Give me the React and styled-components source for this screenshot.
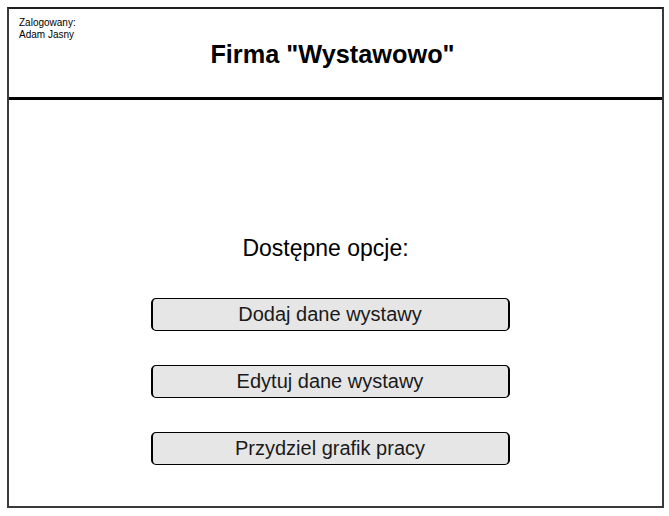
import React from "react";
import styled, { createGlobalStyle } from "styled-components";

const Global = createGlobalStyle`
  body {
    margin: 0;
    background: #ffffff;
    font-family: "Liberation Sans", Arial, sans-serif;
  }
`;

const options = ["Dodaj dane wystawy", "Edytuj dane wystawy", "Przydziel grafik pracy"];

const App = () => {
  return (
    <>
      <Global />
      <Frame>
        <Header>
          <User>
            Zalogowany:
            <br />
            Adam Jasny
          </User>
          <Title>Firma "Wystawowo"</Title>
        </Header>
        <Main>
          <Heading>Dostępne opcje:</Heading>
          <Options>
            {options.map((o) => (
              <OptionButton key={o}>{o}</OptionButton>
            ))}
          </Options>
        </Main>
      </Frame>
    </>
  );
};

export default App;

const Frame = styled.div`
  margin: 7px 0 0 7px;
  width: 657px;
  height: 501px;
  box-sizing: border-box;
  border: 2px solid #3a3a3a;
  border-top-color: #1e1e1e;
  display: flex;
  flex-direction: column;
`;

const Header = styled.div`
  height: 88px;
  border-bottom: 3px solid #000;
  display: flex;
  align-items: flex-start;
  justify-content: center;
  position: relative;
  flex-shrink: 0;
`;

const User = styled.div`
  position: absolute;
  left: 10px;
  top: 8px;
  font-size: 10px;
  line-height: 12px;
  color: #000;
`;

const Title = styled.h1`
  margin: 31px 0 0 -6px;
  font-size: 25.3px;
  font-weight: bold;
  color: #000;
`;

const Main = styled.div`
  flex: 1;
  display: flex;
  flex-direction: column;
  align-items: center;
  padding-top: 135px;
`;

const Heading = styled.div`
  font-size: 23px;
  line-height: 27px;
  color: #000;
  margin-left: -20px;
`;

const Options = styled.div`
  margin-top: 36px;
  display: flex;
  flex-direction: column;
  gap: 34px;
  margin-left: -11px;
`;

const OptionButton = styled.button`
  width: 359px;
  height: 33px;
  box-sizing: border-box;
  background: #e6e6e6;
  border: 1px solid #000;
  border-left-width: 2px;
  border-right-width: 2px;
  border-radius: 5px;
  font-family: "Liberation Sans", Arial, sans-serif;
  font-size: 20px;
  color: #1a1a1a;
  padding: 0;
  cursor: pointer;
`;
